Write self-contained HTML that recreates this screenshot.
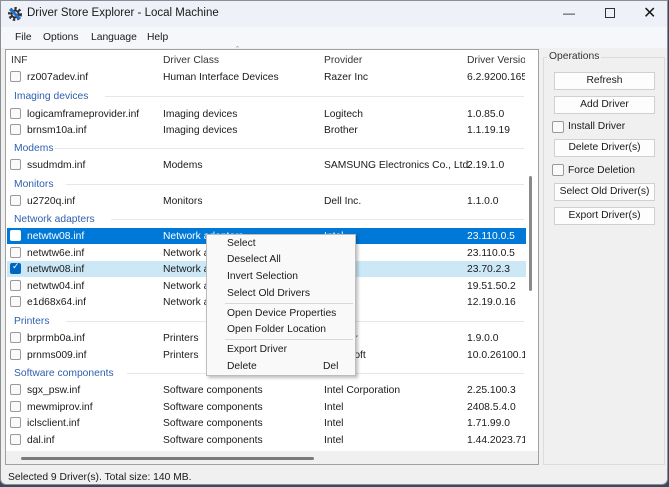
<!DOCTYPE html>
<html><head><meta charset="utf-8"><style>
*{margin:0;padding:0;box-sizing:border-box}
body{width:669px;height:487px;overflow:hidden;background:#3a4a5a;font-family:"Liberation Sans",sans-serif;font-size:10.3px;color:#1a1a1a;position:relative}
.win{position:absolute;left:0;top:0;width:668px;height:485px;background:#f0f0f0;border:1px solid #8a8f96;border-radius:0 0 6px 6px;overflow:hidden}
.abs{position:absolute;white-space:nowrap}
.title{position:absolute;left:0;top:0;width:668px;height:26px;background:#eef2f8}
.menu{position:absolute;left:0;top:26px;width:668px;height:21px;background:#f5f7fb}
.list{position:absolute;left:4px;top:48px;width:534px;height:416px;background:#fff;border:1px solid #a0a0a0}
.cb{position:absolute;width:11px;height:11px;border:1px solid #9a9a9a;border-radius:2px;background:#fafafa}
.grp{color:#2f5fb0}
.gl{position:absolute;height:1px;background:#e4e8ee}
.btn{position:absolute;left:553px;width:101px;height:18px;background:#fdfdfd;border:1px solid #d0d0d0;text-align:center;line-height:16px}
.cm{position:absolute;left:205px;top:233px;width:150px;height:142px;background:#f9f9f9;border:1px solid #bdbdbd;box-shadow:2px 2px 3px rgba(0,0,0,.25);z-index:5}
.sep{position:absolute;left:18px;width:128px;height:1px;background:#d8d8d8}
.v{width:58px;overflow:hidden}
</style></head><body><div class="win">
<div class="title"></div>
<svg class="abs" style="left:6px;top:5px" width="16" height="16" viewBox="0 0 16 16"><circle cx="8" cy="8" r="5.5" fill="none" stroke="#333" stroke-width="3" stroke-dasharray="2.2 2"/><circle cx="8" cy="8" r="3.5" fill="none" stroke="#333" stroke-width="2"/><path d="M3 3 L13 13" stroke="#1e6fd0" stroke-width="3"/></svg>
<div class="abs" style="left:26px;top:6px;font-size:11.5px">Driver Store Explorer - Local Machine</div>
<div class="abs" style="left:562px;top:5px;font-size:12px">&#8212;</div>
<div class="abs" style="left:604px;top:7px;width:10px;height:10px;border:1px solid #333"></div>
<div class="abs" style="left:642px;top:2px;font-size:16px">&#10005;</div>
<div class="menu"></div>
<div class="abs" style="left:14px;top:31px">File</div>
<div class="abs" style="left:42px;top:31px">Options</div>
<div class="abs" style="left:90px;top:31px">Language</div>
<div class="abs" style="left:146px;top:31px">Help</div>

<div class="list"></div>
<div class="abs" style="left:10px;top:54px;color:#333">INF</div>
<div class="abs" style="left:162px;top:54px;color:#333">Driver Class</div>
<div class="abs" style="left:235px;top:44px;color:#888;font-size:9px">&#710;</div>
<div class="abs" style="left:323px;top:54px;color:#333">Provider</div>
<div class="abs v" style="left:466px;top:54px;color:#333">Driver Versio</div>

<div class="abs" style="left:6px;top:227px;width:519px;height:16px;background:#0078d7"></div>
<div class="abs" style="left:6px;top:260px;width:519px;height:16px;background:#cce8f6"></div>

<div id="rows"></div>
<div class="abs" style="left:525px;top:49px;width:12px;height:401px;background:#fff"></div>
<div class="abs" style="left:528px;top:175px;width:3px;height:115px;background:#8a8a8a;border-radius:2px"></div>
<div class="abs" style="left:5px;top:450px;width:532px;height:13px;background:#f0f0f0"></div>
<div class="abs" style="left:20px;top:456px;width:293px;height:3px;background:#7a7a7a;border-radius:2px"></div>

<div class="abs" style="left:542px;top:56px;width:122px;height:408px;border:1px solid #dcdcdc"></div>
<div class="abs" style="left:546px;top:50px;background:#f0f0f0;padding:0 2px;color:#333">Operations</div>
<div class="btn" style="top:71px">Refresh</div>
<div class="btn" style="top:95px">Add Driver</div>
<div class="cb" style="left:551px;top:120px;width:12px;height:12px"></div>
<div class="abs" style="left:567px;top:120px">Install Driver</div>
<div class="btn" style="top:138px">Delete Driver(s)</div>
<div class="cb" style="left:551px;top:163px;width:12px;height:12px"></div>
<div class="abs" style="left:567px;top:164px">Force Deletion</div>
<div class="btn" style="top:182px">Select Old Driver(s)</div>
<div class="btn" style="top:206px">Export Driver(s)</div>

<div class="abs" style="left:7px;top:471px">Selected 9 Driver(s). Total size: 140 MB.</div>

<div class="cm">
<div class="abs" style="left:20px;top:3px">Select</div>
<div class="abs" style="left:20px;top:19px">Deselect All</div>
<div class="abs" style="left:20px;top:36px">Invert Selection</div>
<div class="abs" style="left:20px;top:53px">Select Old Drivers</div>
<div class="sep" style="top:68px"></div>
<div class="abs" style="left:20px;top:73px">Open Device Properties</div>
<div class="abs" style="left:20px;top:89px">Open Folder Location</div>
<div class="sep" style="top:104px"></div>
<div class="abs" style="left:20px;top:109px">Export Driver</div>
<div class="abs" style="left:20px;top:126px">Delete</div>
<div class="abs" style="left:116px;top:126px">Del</div>
</div>
</div>
<script>
var R=[
['r',76,'rz007adev.inf','Human Interface Devices','Razer Inc','6.2.9200.165'],
['g',95,'Imaging devices'],
['r',113,'logicamframeprovider.inf','Imaging devices','Logitech','1.0.85.0'],
['r',129,'brnsm10a.inf','Imaging devices','Brother','1.1.19.19'],
['g',147,'Modems'],
['r',164,'ssudmdm.inf','Modems','SAMSUNG Electronics Co., Ltd.','2.19.1.0'],
['g',183,'Monitors'],
['r',200,'u2720q.inf','Monitors','Dell Inc.','1.1.0.0'],
['g',218,'Network adapters'],
['s',235,'netwtw08.inf','Network adapters','Intel','23.110.0.5'],
['r',252,'netwtw6e.inf','Network adapters','Intel','23.110.0.5'],
['c',268,'netwtw08.inf','Network adapters','Intel','23.70.2.3'],
['r',285,'netwtw04.inf','Network adapters','Intel','19.51.50.2'],
['r',301,'e1d68x64.inf','Network adapters','Intel','12.19.0.16'],
['g',320,'Printers'],
['r',337,'brprmb0a.inf','Printers','Brother','1.9.0.0'],
['r',354,'prnms009.inf','Printers','Microsoft','10.0.26100.1'],
['g',372,'Software components'],
['r',389,'sgx_psw.inf','Software components','Intel Corporation','2.25.100.3'],
['r',406,'mewmiprov.inf','Software components','Intel','2408.5.4.0'],
['r',422,'iclsclient.inf','Software components','Intel','1.71.99.0'],
['r',439,'dal.inf','Software components','Intel','1.44.2023.71']];
var h='';
R.forEach(function(r){var y=r[1]-5;
if(r[0]=='g'){var w=r[2].length*5.6;h+='<div class="abs grp" style="left:13px;top:'+y+'px">'+r[2]+'</div><div class="gl" style="left:'+(20+w)+'px;top:'+(r[1])+'px;width:'+(503-w)+'px"></div>';return;}
var col=r[0]=='s'?'#fff':'#1a1a1a';
var cb=r[0]=='c'?'background:#0067c0;border-color:#0067c0':(r[0]=='s'?'background:#fff;border-color:#fff':'');
h+='<div class="cb" style="left:9px;top:'+(r[1]-6)+'px;'+cb+'">'+(r[0]=='c'?'<span style="position:absolute;left:1px;top:-3px;color:#fff;font-size:9px">&#10003;</span>':'')+'</div>';
h+='<div class="abs" style="left:26px;top:'+y+'px;color:'+col+'">'+r[2]+'</div>';
h+='<div class="abs" style="left:162px;top:'+y+'px;color:'+col+'">'+r[3]+'</div>';
h+='<div class="abs" style="left:323px;top:'+y+'px;color:'+col+'">'+r[4]+'</div>';
h+='<div class="abs v" style="left:466px;top:'+y+'px;color:'+col+'">'+r[5]+'</div>';});
document.getElementById('rows').innerHTML=h;
</script>
</body></html>
